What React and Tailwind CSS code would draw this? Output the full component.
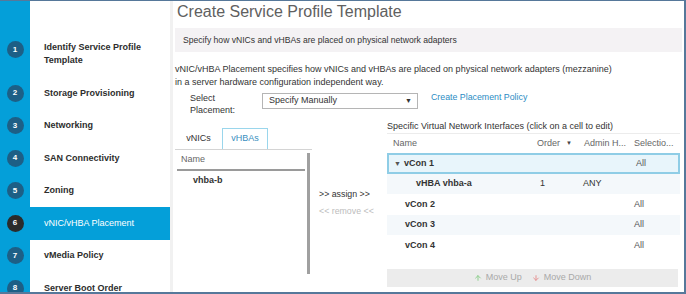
import React from "react";
import { ArrowUp, ArrowDown } from "lucide-react";

const steps = [
  { n: 1, label: ["Identify Service Profile", "Template"] },
  { n: 2, label: ["Storage Provisioning"] },
  { n: 3, label: ["Networking"] },
  { n: 4, label: ["SAN Connectivity"] },
  { n: 5, label: ["Zoning"] },
  { n: 6, label: ["vNIC/vHBA Placement"], active: true },
  { n: 7, label: ["vMedia Policy"] },
  { n: 8, label: ["Server Boot Order"] },
];

function Sidebar() {
  return (
    <div className="w-[170px] shrink-0 flex flex-col pt-[30px] bg-[linear-gradient(to_right,#049fd9_30px,#ffffff_30px)]">
      {steps.map((s) => {
        const first = s.n === 1;
        return (
          <div
            key={s.n}
            className={
              (first ? "h-[46px] items-start pt-[10px] " : "h-[32.5px] items-center ") +
              "flex shrink-0 " +
              (s.active ? "bg-[#049fd9] text-white" : "text-[#2d2d2d]")
            }
          >
            <div className="w-[30px] flex justify-center shrink-0">
              <div
                className={
                  "w-[17px] h-[17px] rounded-full flex items-center justify-center text-[8px] font-bold text-white " +
                  (s.active ? "bg-[#2b2b2b]" : "bg-[#1d5f86]")
                }
              >
                {s.n}
              </div>
            </div>
            <div
              className={
                "pl-[14px] text-[9px] leading-[13px] " + (s.active ? "font-normal" : "font-bold")
              }
            >
              {s.label.map((l) => (
                <div key={l}>{l}</div>
              ))}
            </div>
          </div>
        );
      })}
    </div>
  );
}

const rows = [
  { name: "vCon 1", sel: "All", kind: "open" },
  { name: "vHBA vhba-a", order: "1", admin: "ANY", kind: "child" },
  { name: "vCon 2", sel: "All", kind: "white" },
  { name: "vCon 3", sel: "All", kind: "stripe" },
  { name: "vCon 4", sel: "All", kind: "white" },
];

function RightTable() {
  return (
    <div className="flex-1 pr-[4px] flex flex-col">
      <div className="text-[9px] leading-[13px] text-[#333] whitespace-nowrap">
        Specific Virtual Network Interfaces (click on a cell to edit)
      </div>
      <div className="grid grid-cols-[148px_47px_50px_1fr] h-[20px] items-center text-[9px] text-[#666] border-t border-[#ececec] whitespace-nowrap">
        <div className="pl-[6px]">Name</div>
        <div className="pl-[2px] flex items-center gap-[6px]">
          Order <span className="text-[6px] text-[#444]">▼</span>
        </div>
        <div className="pl-[2px]">Admin H...</div>
        <div className="pl-[2px]">Selectio...</div>
      </div>
      {rows.map((r) => (
        <div
          key={r.name}
          className={
            "grid grid-cols-[148px_47px_50px_1fr] h-[20.5px] items-center text-[9px] text-[#333] " +
            (r.kind === "open"
              ? "border-2 border-[#8fcde6] bg-[#e8f5fb]"
              : r.kind === "child" || r.kind === "stripe"
              ? "bg-[#f4f8fb]"
              : "bg-white")
          }
        >
          <div
            className={
              "font-bold flex items-center " +
              (r.kind === "open" ? "pl-[5px]" : r.kind === "child" ? "pl-[29px]" : "pl-[18px]")
            }
          >
            {r.kind === "open" && (
              <span className="text-[7px] mr-[3px] mt-[2px] text-[#555]">▼</span>
            )}
            {r.name}
          </div>
          <div className="pl-[5px]">{r.order}</div>
          <div className="pl-[1px]">{r.admin}</div>
          <div className="pl-[2px] text-[#555]">{r.sel}</div>
        </div>
      ))}
      <div className="mt-[13px] h-[18px] mr-[2px] bg-[#ececec] flex items-center justify-center text-[9px] text-[#a9a9a9] gap-[2px]">
        <ArrowUp size={8} strokeWidth={3} color="#8fcf8f" />
        <span className="ml-[2px]">Move Up</span>
        <ArrowDown size={8} strokeWidth={3} color="#e59494" className="ml-[8px]" />
        <span className="ml-[2px]">Move Down</span>
      </div>
    </div>
  );
}

function Main() {
  return (
    <div className="flex-1 border-l-[3px] border-[#f1f1f1] flex flex-col">
      <div className="h-[27px] pl-[4px] text-[16px] leading-[22px] text-[#606060] whitespace-nowrap">
        Create Service Profile Template
      </div>
      <div className="h-[24px] ml-[2px] mr-[2px] bg-[#f4f2f4] flex items-center pl-[8px] text-[8.6px] text-[#333] whitespace-nowrap">
        Specify how vNICs and vHBAs are placed on physical network adapters
      </div>
      <div className="mt-[10.5px] pl-[2px] text-[9px] leading-[13px] text-[#333] whitespace-nowrap">
        <div>
          vNIC/vHBA Placement specifies how vNICs and vHBAs are placed on physical network adapters (mezzanine)
        </div>
        <div>in a server hardware configuration independent way.</div>
      </div>
      <div className="mt-[3.5px] pl-[17px] flex items-start">
        <div className="w-[72px] text-[9px] leading-[12px] text-[#333]">
          <div>Select</div>
          <div>Placement:</div>
        </div>
        <div className="mt-[1px] w-[156px] h-[16px] border border-[#b5b5b5] bg-white flex items-center justify-between pl-[6px] pr-[5px] text-[9px] text-[#333]">
          <span>Specify Manually</span>
          <span className="text-[7px] text-[#333]">▼</span>
        </div>
        <div className="ml-[13px] mt-[-1.5px] text-[8.8px] leading-[12px] text-[#2b8cc4] whitespace-nowrap">
          Create Placement Policy
        </div>
      </div>
      <div className="mt-[4px] pl-[2px] flex flex-1">
        <div className="w-[137px] shrink-0 flex flex-col pt-[8px]">
          <div className="h-[21px] flex text-[9px]">
            <div className="w-[47px] flex items-center justify-center text-[#333]">vNICs</div>
            <div className="w-[46px] flex items-center justify-center border border-b-0 border-[#9ad6ec] text-[#3a8fc0] bg-white">
              vHBAs
            </div>
          </div>
          <div className="border-t border-[#d4d4d4] flex">
            <div className="w-[128px] ml-[2px] flex flex-col">
              <div className="h-[21px] flex items-center pl-[4px] text-[9px] text-[#666] border-b-2 border-[#9a9a9a]">
                Name
              </div>
              <div className="h-[20px] flex items-center pl-[16px] text-[9px] font-bold text-[#333]">
                vhba-b
              </div>
            </div>
            <div className="ml-[2px] mt-[3px] w-[3px] h-[121px] bg-[#a0a0a0]" />
          </div>
        </div>
        <div className="w-[75px] shrink-0 pl-[7px] flex flex-col text-[8.8px] leading-[12px] whitespace-nowrap">
          <div className="mt-[68px] text-[#333]">&gt;&gt; assign &gt;&gt;</div>
          <div className="mt-[5px] text-[#bdbdbd]">&lt;&lt; remove &lt;&lt;</div>
        </div>
        <RightTable />
      </div>
    </div>
  );
}

export default function App() {
  return (
    <div className="w-[686px] h-[294px] overflow-hidden bg-white border-t border-r-2 border-b-2 border-[#56789a] flex font-['Liberation_Sans',Arial,sans-serif] text-[#333]">
      <Sidebar />
      <Main />
    </div>
  );
}
